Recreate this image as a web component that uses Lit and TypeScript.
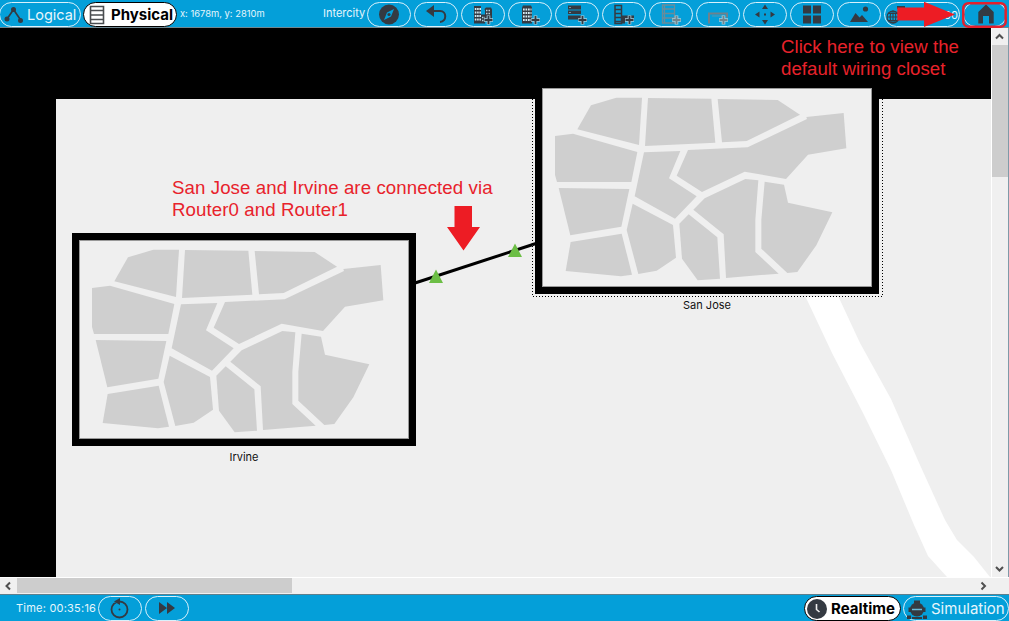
import { LitElement, html, svg, css } from "lit";
import { customElement, property } from "lit/decorators.js";

const INK = "#343a42";

const glyphs: Record<string, unknown> = {
  compass: svg`<circle cx="22" cy="13" r="10" fill=${INK}/><path d="M27 7.5 24 15 17 18.500 20 11Z" fill="#049fd9"/><circle cx="22" cy="13" r="1.6" fill=${INK}/>`,
  back: svg`<path d="M12 9.500 20 3.500V15.500Z" fill=${INK}/><path d="M18 9.500H26C33 9.500 33 20 26 20.500" fill="none" stroke=${INK} stroke-width="2"/>`,
  city: svg`<path d="M13 4.500H20V22H13Z" fill=${INK}/><path d="M13.800 7.500H20M13.800 11H20M13.800 14.500H20M13.800 18H20" stroke="#d5eaf2" stroke-width="1.800" stroke-dasharray="1.600 0.700"/><path d="M20 13H24V22H20ZM23 8 25 6H30L31 8V20H24V8Z" fill=${INK}/><path d="M25 9H30M25 12H30M21 16H24M21 19H24" stroke="#b9d3de" stroke-width="1.300" stroke-dasharray="1.500 1"/>${plus(INK, 27.5, 18.5)}`,
  building: svg`<path d="M15 4H23L24 6V22H14V6Z" fill=${INK}/><path d="M15 8H23.500M15 11.500H23.500M15 15H23.500M15 18.500H23.500" stroke="#d5eaf2" stroke-width="1.900" stroke-dasharray="1.700 0.800"/>${plus(INK, 27.5, 18.5)}`,
  closet: svg`<path d="M13 4H26V8H13ZM13 9H26V12.500H13ZM13 14H26V18H13Z" fill=${INK}/><path d="M14 6H16M14 11H16" stroke="#7d929d"/>${plus(INK, 27.5, 18.5)}`,
  rack: svg`<path d="M13 4H19.500V22H13ZM13 8H19M13 12H19M13 16H19M13 20H19" fill="none" stroke=${INK} stroke-width="1.500"/><path d="M20 14H32V18H23V22H20Z" fill=${INK}/>${plus(INK, 27.5, 18.5)}`,
  shelf: svg`<path d="M13.500 3.500H25.500V21.500H13.500ZM15.500 4V21M13 7.500H25M13 12H25M13 16.500H25" fill="none" stroke="#6b8c99" stroke-width="1.300"/>${plus("#71858e", 27.5, 18.5)}`,
  table: svg`<path d="M13 22V12H31V16" fill="none" stroke="#6f818b" stroke-width="2"/><path d="M16 14.500H28" stroke="#5798b4"/>${plus("#71858e", 27.5, 18.5)}`,
  move: svg`<path d="M22 3 25 7.500H19ZM22 23 25 18.500H19ZM12 13 16.500 10V16ZM32 13 27.500 10V16Z" fill=${INK}/><rect x="21" y="12" width="2" height="2" fill=${INK}/>`,
  grid: svg`<path d="M13 4H21V12H13ZM23 4H31V12H23ZM13 14H21V22H13ZM23 14H31V22H23Z" fill=${INK}/>`,
  image: svg`<path d="M13 20.500 18.500 11.500 22.500 16 25 13.500 31 20.500Z" fill=${INK}/><circle cx="28.500" cy="7.500" r="2.600" fill=${INK}/>`,
  home: svg`<path d="M15.300 10.500 23 3 30.700 10.500V22H26V14.500H20V22H15.300Z" fill=${INK}/>`,
  reset: svg`<circle cx="21.500" cy="14" r="8" fill="none" stroke=${INK} stroke-width="1.800"/><path d="M14 2.500H19V7H14Z" fill="#049fd9"/><path d="M22 2.500V9.500L16 6Z" fill=${INK}/><circle cx="21.500" cy="14" r="1" fill=${INK}/>`,
  forward: svg`<path d="M14 6.500 22 12.500 14 18.500ZM22 6.500 30 12.500 22 18.500Z" fill=${INK}/>`,
};

function plus(color: string, x: number, y: number) {
  return svg`<path d="M${x} ${y - 4.5}V${y + 4.5}M${x - 4.5} ${y}H${x + 4.5}" stroke="#a5cfdf" stroke-width="3.600"/><path d="M${x} ${y - 4}V${y + 4}M${x - 4} ${y}H${x + 4}" stroke=${color} stroke-width="1.900"/>`;
}

const blocks = [
  "163,169 204,97 280,74 357,74 348,216",
  "375,75 565,77 577,209 366,219",
  "584,78 764,81 831,125 671,204 597,208",
  "96,189 150,182 343,237 325,327 102,327 96,306",
  "363,238 472,234 438,316 521,370 456,437 335,370",
  "495,231 674,223 852,138 850,132 962,120 970,226 855,245 789,318 665,296 537,357 461,308",
  "107,345 319,348 295,461 142,487",
  "143,507 296,482 327,605 294,610 128,594",
  "329,392 450,456 459,554 401,593 346,603 311,471",
  "469,452 497,424 583,493 591,617 524,622 477,557",
  "545,376 667,318 706,322 697,440 697,537 767,602 609,615 602,484 511,410",
  "725,326 783,335 795,389 928,418 880,517 823,597 793,600 715,527 715,440",
];

@customElement("pill-button")
export class PillButton extends LitElement {
  @property() icon = "";
  static styles = css`
    :host { display: block; flex: none; width: 44px; height: 25px; }
    .pill { box-sizing: border-box; width: 100%; height: 100%; border: 1px solid #d9f1fb; border-radius: 13px; }
    svg { display: block; margin: -1px; }
  `;
  render() {
    return html`<div class="pill"><svg width="44" height="25" viewBox="0 0.5 44 25">${glyphs[this.icon]}</svg></div>`;
  }
}

@customElement("city-tile")
export class CityTile extends LitElement {
  @property() name = "";
  static styles = css`
    :host { display: block; width: 344px; font: 11px/14px Inter, sans-serif; color: #111; text-align: center; }
    svg { display: block; }
    .name { padding-top: 4px; }
  `;
  render() {
    return html`<svg width="344" height="213" viewBox="36 24 1032 639">
        <rect x="36" y="24" width="1032" height="639" fill="#000"/>
        <rect x="58.500" y="46.500" width="987" height="594" fill="#efefef" stroke="#999" stroke-width="3"/>
        ${blocks.map((p) => svg`<polygon points=${p} fill="#cfcfcf"/>`)}
      </svg>
      <div class="name">${this.name}</div>`;
  }
}

@customElement("app-root")
export class AppRoot extends LitElement {
  static styles = css`
    :host { display: flex; flex-direction: column; width: 1009px; height: 621px; overflow: hidden; background: #efefef; font-family: Inter, sans-serif; }
    svg { display: block; flex: none; }
    .bar { box-sizing: border-box; display: flex; flex: none; background: #049fd9; color: #e6f6fc; white-space: nowrap; }
    .top { height: 28px; padding-top: 2px; border-bottom: 1px solid #6f8791; position: relative; }
    .bottom { height: 27px; border-top: 1px solid #5d7f8d; padding-top: 1px; }
    .tab { box-sizing: border-box; display: flex; align-items: center; flex: none; height: 25px; border: 1px solid #d9f1fb; border-radius: 13px; font-size: 15px; }
    .on { background: #fff; color: #000; border-color: #000; font-weight: 700; }
    .logical { width: 82px; margin-left: -1px; padding-left: 3px; gap: 4px; font-size: 14.500px; }
    .physical { width: 94px; margin-left: 2px; padding-left: 5px; gap: 6px; }
    .coords { margin-left: 3px; font-size: 9.400px; line-height: 24px; width: 143px; }
    .level { font-size: 11px; line-height: 23px; width: 44px; }
    .tools { display: flex; gap: 3px; }
    .clock { box-sizing: border-box; display: flex; align-items: center; justify-content: flex-end; width: 76px; height: 25px; padding-right: 1px; border: 1px solid #d9f1fb; border-radius: 13px; font-size: 11px; }
    .clock svg { margin-right: auto; }
    .mid { display: flex; flex: none; height: 549px; }
    .canvas { position: relative; width: 991px; height: 549px; overflow: hidden; background: #000; }
    .scene, .irvine, .sanjose, .note, .pointer { position: absolute; }
    .scene { left: 0; top: 0; }
    .irvine { left: 72px; top: 205px; }
    .sanjose { left: 535px; top: 53px; }
    .note { color: #e8222b; font: 18.670px/22px "Liberation Sans", Arial, sans-serif; letter-spacing: 0.090px; white-space: nowrap; }
    .n1 { left: 172px; top: 149px; }
    .n2 { left: 781px; top: 8px; letter-spacing: 0.030px; }
    .pointer { left: 890px; top: 0; }
    .vscroll { box-sizing: border-box; display: flex; flex-direction: column; width: 18px; background: #f0f0f0; border-left: 1px solid #fff; border-right: 1px solid #7f9aa8; }
    .vthumb { height: 132px; background: #cdcdcd; }
    .hscroll { box-sizing: border-box; display: flex; flex: none; height: 17px; background: #f0f0f0; border-top: 1px solid #fff; }
    .hthumb { width: 275px; height: 15px; background: #cdcdcd; }
    .push { flex: 1; }
    .time { width: 82px; padding-left: 16px; font-size: 11px; line-height: 24px; letter-spacing: 0.220px; }
    .real { width: 97px; padding-left: 2px; gap: 4px; }
    .sim { width: 106px; margin: 0 0 0 2px; padding-left: 3px; gap: 4px; }
  `;

  render() {
    return html`
      <div class="bar top">
        <div class="tab logical">
          <svg width="20" height="20"><path d="M4 14 10.500 4.500 18 15.500" fill="none" stroke=${INK} stroke-width="1.700"/><g fill=${INK}><circle cx="4" cy="14" r="2.500"/><circle cx="10.500" cy="4.500" r="2.500"/><circle cx="17.500" cy="15.500" r="2.500"/></g></svg>
          <span>Logical</span>
        </div>
        <div class="tab on physical">
          <svg width="16" height="20"><path d="M1.500 1.500H14.500V18.500H1.500ZM1.500 5.500H14.500M1.500 10H14.500M1.500 14.500H14.500" fill="none" stroke="#4a4d50" stroke-width="1.600"/></svg>
          <span>Physical</span>
        </div>
        <span class="coords">x: 1678m, y: 2810m</span>
        <span class="level">Intercity</span>
        <div class="tools">
          ${["compass", "back", "city", "building", "closet", "rack", "shelf", "table", "move", "grid", "image"].map((i) => html`<pill-button icon=${i}></pill-button>`)}
          <div class="clock">
            <svg width="22" height="23"><g fill="none" stroke=${INK} stroke-width="1.100"><circle cx="8" cy="14" r="6"/><ellipse cx="8" cy="14" rx="2.800" ry="6"/><path d="M2 14H14M3 10.500H13M3 17.500H13M8 8V20"/></g><path d="M12 3H20V6H12Z" fill=${INK}/></svg>
            <span>00</span>
          </div>
          <pill-button icon="home"></pill-button>
        </div>
        <svg class="pointer" width="119" height="28"><path d="M7.300 7.500H34V1.700L65 14.500 34 27V20.500H7.300Z" fill="#ed1c24"/><rect x="73.300" y="3.200" width="42.400" height="23.500" rx="5" fill="none" stroke="#e3202c" stroke-width="2.500"/></svg>
      </div>
      <div class="mid">
        <div class="canvas">
          <svg class="scene" width="991" height="549" viewBox="0 28 991 549">
            <rect x="56" y="99" width="935" height="478" fill="#efefef"/>
            <path d="M800 285 832 353 863 413 891 470 914 525 928 556 947 577H990L974 557 957 540 945 520 920 465 891 399 860 343 833 285Z" fill="#fff"/>
            <path d="M415 283 536 243.500" stroke="#000" stroke-width="3"/>
            <path d="M436 269.500 443 283H429ZM515 243.500 522 257H508Z" fill="#6cbe45"/>
            <path d="M454.500 206H472V227H480L463.500 250.500 447 227H454.500Z" fill="#ed1c24"/>
            <rect x="532" y="99" width="351" height="198" fill="#efefef"/>
            <path d="M532.500 99V296.500H882.500V99" fill="none" stroke="#000" stroke-dasharray="1 2"/>
            <path d="M532 244.800 536 243.500" stroke="#000" stroke-width="3"/>
          </svg>
          <city-tile class="irvine" name="Irvine"></city-tile>
          <city-tile class="sanjose" name="San Jose"></city-tile>
          <div class="note n1">San Jose and Irvine are connected via<br>Router0 and Router1</div>
          <div class="note n2">Click here to view the<br>default wiring closet</div>
        </div>
        <div class="vscroll">
          <svg width="16" height="17"><path d="M4 10.500 7.500 7 11 10.500" fill="none" stroke="#505050" stroke-width="2"/></svg>
          <div class="vthumb"></div>
          <div class="push"></div>
          <svg width="16" height="17"><path d="M4 7 7.500 10.500 11 7" fill="none" stroke="#505050" stroke-width="2"/></svg>
        </div>
      </div>
      <div class="hscroll">
        <svg width="17" height="16"><path d="M10 4.500 6.500 8 10 11.500" fill="none" stroke="#505050" stroke-width="2"/></svg>
        <div class="hthumb"></div>
        <div class="push"></div>
        <svg width="35" height="16"><path d="M7.500 4.500 11 8 7.500 11.500" fill="none" stroke="#505050" stroke-width="2"/></svg>
      </div>
      <div class="bar bottom">
        <span class="time">Time: 00:35:16</span>
        <div class="tools">
          <pill-button icon="reset"></pill-button>
          <pill-button icon="forward"></pill-button>
        </div>
        <div class="push"></div>
        <div class="tab on real">
          <svg width="20" height="20"><circle cx="10" cy="10" r="10" fill=${INK}/><path d="M9.500 5V10.500L12.500 13" fill="none" stroke="#eee" stroke-width="1.600"/></svg>
          <span>Realtime</span>
        </div>
        <div class="tab sim">
          <svg width="20" height="20"><path d="M7 1.500H13V4H7ZM1.500 8.500H18.500V13H1.500ZM0 16.500H4V20H0ZM5 18H15V20H5ZM16 16.500H20V20H16Z" fill=${INK}/><circle cx="10" cy="10.500" r="7" fill=${INK}/><path d="M5 10.500H15" stroke="#6bb9d7" stroke-width="1.500"/></svg>
          <span>Simulation</span>
        </div>
      </div>`;
  }
}
